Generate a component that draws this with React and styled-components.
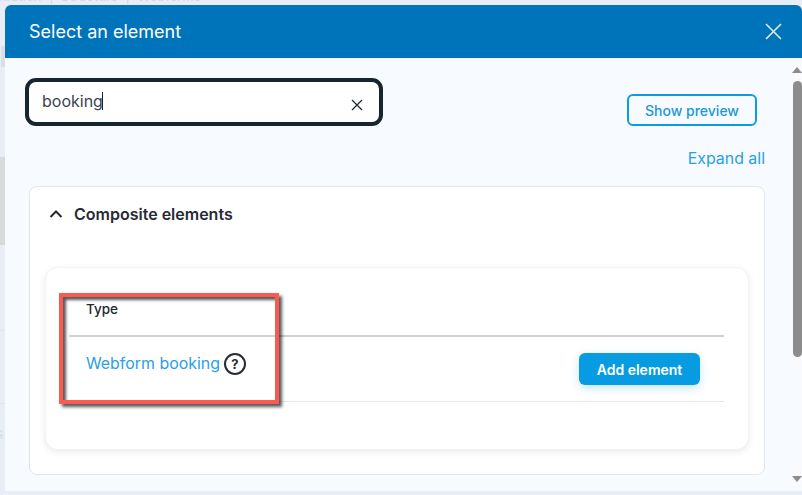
import React from "react";
import styled, { createGlobalStyle } from "styled-components";

const Global = createGlobalStyle`
  html, body { margin: 0; padding: 0; width: 802px; height: 495px; overflow: hidden; background: #e9edf5; }
  body { font-family: Inter, "Liberation Sans", sans-serif; }
`;

const Backdrop = styled.div`
  width: 802px;
  height: 495px;
  box-sizing: border-box;
  padding: 5px 0 0 5px;
  background: #e9edf5;
  overflow: hidden;
  position: relative;
`;

const Ghost = styled.div`
  position: absolute;
  top: -12px;
  left: -47px;
  font-size: 13px;
  line-height: 17px;
  color: #d3d7df;
  white-space: nowrap;
  word-spacing: 4px;
`;

const GhostBlock = styled.div`
  position: absolute;
  left: ${(p) => p.$left}px;
  top: ${(p) => p.$top}px;
  width: ${(p) => 5 - p.$left}px;
  height: ${(p) => p.$height}px;
  background: ${(p) => p.$color};
`;

const GhostRule = styled.div`
  position: absolute;
  left: 0;
  top: ${(p) => p.$top}px;
  width: 5px;
  height: 1px;
  background: #e2e5ec;
`;

const GhostLetter = styled.div`
  position: absolute;
  left: -5px;
  top: 424px;
  font-size: 16px;
  line-height: 18px;
  color: #cfe0ee;
`;

const Dialog = styled.div`
  position: relative;
  width: 797px;
  height: 486px;
  display: flex;
  flex-direction: column;
  background: #f7fafe;
  border-radius: 6px 6px 0 0;
  overflow: hidden;
`;

const Header = styled.header`
  flex: none;
  height: 53px;
  background: #0074bb;
  display: flex;
  align-items: center;
  justify-content: space-between;
  padding: 0 20px 0 24px;
  color: #fff;
  font-size: 18px;
`;

const Close = styled.svg`
  width: 17px;
  height: 17px;
  stroke: #dfeaf3;
  stroke-width: 1.6;
  fill: none;
`;

const Body = styled.div`
  flex: 1;
  display: flex;
  min-height: 0;
`;

const Content = styled.div`
  width: 784px;
  box-sizing: border-box;
  padding: 20px 24px 0;
`;

const TopRow = styled.div`
  display: flex;
  justify-content: space-between;
  align-items: flex-end;
  margin-left: -4px;
`;

const Search = styled.div`
  width: 358px;
  height: 48px;
  box-sizing: border-box;
  border: 4px solid #17252f;
  border-radius: 11px;
  background: #fff;
  display: flex;
  align-items: center;
  justify-content: space-between;
  padding: 0 16px 0 13px;
  font-size: 16px;
  color: #3a4450;
`;

const SearchValue = styled.span`
  margin-top: -2px;
`;

const Caret = styled.span`
  display: inline-block;
  width: 1.5px;
  height: 18px;
  margin-left: -1px;
  background: #17252f;
  vertical-align: -3px;
`;

const ClearIcon = styled.svg`
  width: 12px;
  height: 12px;
  margin-top: 6px;
  stroke: #1f2a35;
  stroke-width: 1.3;
  fill: none;
`;

const PreviewButton = styled.button`
  width: 130px;
  height: 32px;
  margin-right: 8px;
  box-sizing: border-box;
  border: 2px solid #0a9de2;
  border-radius: 6px;
  background: transparent;
  color: #1a98dc;
  font: 500 14px Inter, sans-serif;
  padding: 0;
`;

const ExpandRow = styled.div`
  display: flex;
  justify-content: flex-end;
  align-items: center;
  margin-top: 20px;
  height: 24px;
`;

const ExpandLink = styled.a`
  font-size: 15.9px;
  color: #2aa0e4;
`;

const Accordion = styled.section`
  width: 736px;
  height: 289px;
  margin-top: 16px;
  box-sizing: border-box;
  background: #fff;
  border: 1px solid #e2e5ea;
  border-radius: 8px;
  padding: 0 15px;
`;

const AccordionHead = styled.div`
  height: 55px;
  box-sizing: border-box;
  display: flex;
  align-items: center;
  gap: 11px;
  padding: 0 0 2px 4px;
  font-size: 16px;
  font-weight: 600;
  color: #262b36;
`;

const Chevron = styled.svg`
  width: 14px;
  height: 14px;
  margin-top: 1px;
  stroke: #262b36;
  stroke-width: 2;
  fill: none;
`;

const Card = styled.div`
  width: 704px;
  height: 183px;
  margin-top: 25px;
  box-sizing: border-box;
  background: #fff;
  border: 1px solid #f2f3f5;
  border-radius: 13px;
  box-shadow: 0 2px 6px rgba(30, 50, 80, 0.1);
  padding: 0 24px 0 23px;
  position: relative;
`;

const TableHead = styled.div`
  height: 69px;
  box-sizing: border-box;
  padding: 33px 0 0 17px;
  border-bottom: 2px solid #cfd0d2;
  font-size: 13.5px;
  font-weight: 500;
  color: #23272f;
`;

const TableRow = styled.div`
  height: 65px;
  box-sizing: border-box;
  display: flex;
  align-items: center;
  justify-content: space-between;
  border-bottom: 1px solid #e6e8ec;
  padding: 0 24px 0 17px;
`;

const TypeCell = styled.div`
  display: flex;
  align-items: center;
  gap: 4px;
  margin-bottom: 11px;
`;

const TypeLink = styled.a`
  font-size: 15.9px;
  color: #2aa0e4;
`;

const HelpIcon = styled.span`
  width: 22px;
  height: 22px;
  box-sizing: border-box;
  border: 2px solid #262b36;
  border-radius: 50%;
  display: flex;
  align-items: center;
  justify-content: center;
  font-size: 13px;
  font-weight: 700;
  color: #262b36;
`;

const AddButton = styled.button`
  width: 121px;
  height: 32px;
  border: none;
  border-radius: 6px;
  background: #079ce1;
  color: #fff;
  font: 600 14px Inter, sans-serif;
  padding: 0;
  box-shadow: 0 3px 8px rgba(7, 156, 225, 0.25);
`;

const Highlight = styled.div`
  position: absolute;
  left: 13px;
  top: 25px;
  width: 220px;
  height: 111px;
  box-sizing: border-box;
  border: 4px solid #fb5b4f;
  box-shadow: 3px 3px 3px rgba(0, 0, 0, 0.65), inset 3px 3px 3px rgba(0, 0, 0, 0.65);
  pointer-events: none;
`;

const Scrollbar = styled.div`
  width: 13px;
  position: relative;
  background: #f9fafd;
`;

const Arrow = styled.div`
  position: absolute;
  left: 3px;
  width: 0;
  height: 0;
  border-left: 5px solid transparent;
  border-right: 5px solid transparent;
  ${(p) => (p.$up ? "top: 9px; border-bottom: 6px solid #8c8c8c;" : "bottom: 9px; border-top: 6px solid #8c8c8c;")}
`;

const Thumb = styled.div`
  position: absolute;
  top: 23px;
  left: 4px;
  width: 9px;
  height: 276px;
  background: #8c8c8c;
  border-radius: 5px;
`;

export default function App() {
  return (
    <>
      <Global />
      <Backdrop>
        <Ghost>Administration | Structure | Webforms</Ghost>
        <GhostBlock $left={1} $top={46} $height={21} $color="#dcdee6" />
        <GhostBlock $left={0} $top={157} $height={88} $color="#d9dadc" />
        <GhostRule $top={330} />
        <GhostRule $top={403} />
        <GhostLetter>s</GhostLetter>
        <Dialog>
          <Header>
            <span>Select an element</span>
            <Close viewBox="0 0 17 17">
              <path d="M1 1l15 15M16 1L1 16" />
            </Close>
          </Header>
          <Body>
            <Content>
              <TopRow>
                <Search>
                  <SearchValue>
                    booking
                    <Caret />
                  </SearchValue>
                  <ClearIcon viewBox="0 0 12 12">
                    <path d="M1 1l10 10M11 1L1 11" />
                  </ClearIcon>
                </Search>
                <PreviewButton>Show preview</PreviewButton>
              </TopRow>
              <ExpandRow>
                <ExpandLink>Expand all</ExpandLink>
              </ExpandRow>
              <Accordion>
                <AccordionHead>
                  <Chevron viewBox="0 0 14 14">
                    <path d="M1.5 10L7 4.5l5.5 5.5" />
                  </Chevron>
                  Composite elements
                </AccordionHead>
                <Card>
                  <TableHead>Type</TableHead>
                  <TableRow>
                    <TypeCell>
                      <TypeLink>Webform booking</TypeLink>
                      <HelpIcon>?</HelpIcon>
                    </TypeCell>
                    <AddButton>Add element</AddButton>
                  </TableRow>
                  <Highlight />
                </Card>
              </Accordion>
            </Content>
            <Scrollbar>
              <Arrow $up />
              <Thumb />
              <Arrow />
            </Scrollbar>
          </Body>
        </Dialog>
      </Backdrop>
    </>
  );
}
